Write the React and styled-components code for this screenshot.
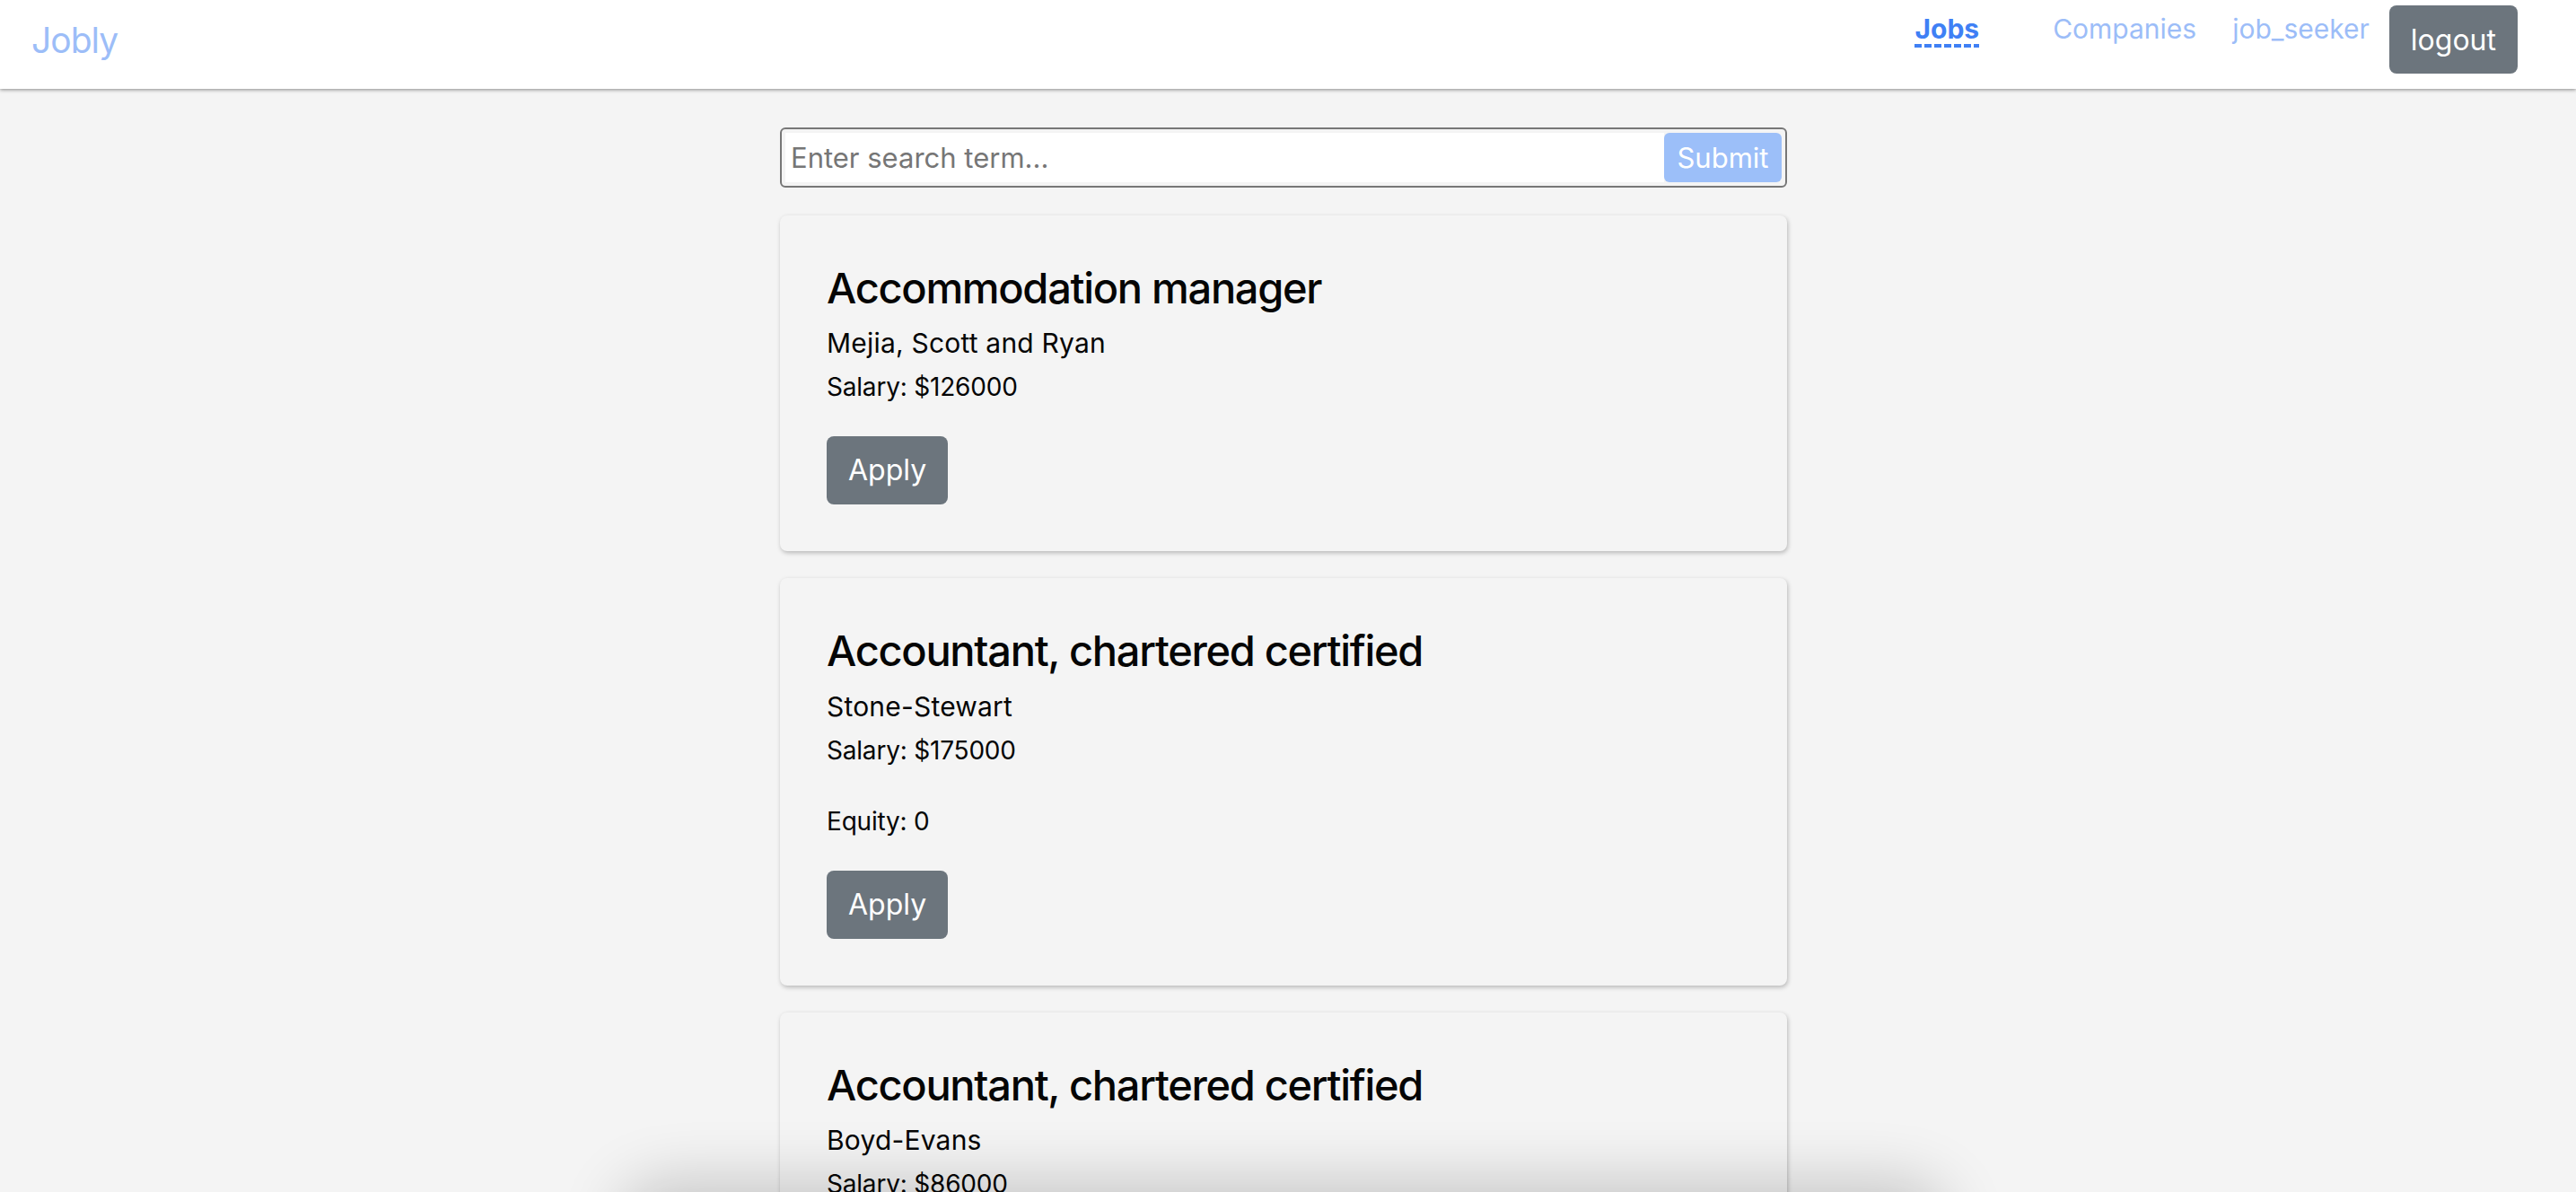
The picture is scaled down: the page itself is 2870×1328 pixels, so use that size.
import React from "react";
import styled, { createGlobalStyle } from "styled-components";

const COLOR = {
  PAGE: "#f4f4f4",
  LINK: "#9cbdf8",
  ACTIVE: "#3f80f5",
  GREY_BTN: "#6c757d",
  SUBMIT: "#9cbff9",
  TEXT: "#050505",
};

const FONT = `Inter, "Noto Sans", "Liberation Sans", sans-serif`;

const jobs = [
  { id: 1, title: "Accommodation manager", company: "Mejia, Scott and Ryan", salary: 126000, equity: null },
  { id: 2, title: "Accountant, chartered certified", company: "Stone-Stewart", salary: 175000, equity: "0" },
  { id: 3, title: "Accountant, chartered certified", company: "Boyd-Evans", salary: 86000, equity: "0" },
];

const App = () => {
  return (
    <>
      <GlobalStyle />
      <NavBar>
        <Brand href="#">Jobly</Brand>
        <NavList>
          <NavLink $active $space={0}>Jobs</NavLink>
          <NavLink $space={82}>Companies</NavLink>
          <NavLink $space={40}>job_seeker</NavLink>
          <LogoutButton>logout</LogoutButton>
        </NavList>
      </NavBar>
      <Main>
        <SearchForm onSubmit={(e) => e.preventDefault()}>
          <SearchInput placeholder="Enter search term..." />
          <SubmitButton type="submit">Submit</SubmitButton>
        </SearchForm>
        <CardList>
          {jobs.map((job) => (
            <JobCard key={job.id}>
              <JobTitle>{job.title}</JobTitle>
              <CompanyName>{job.company}</CompanyName>
              <Detail>Salary: ${job.salary}</Detail>
              {job.equity !== null && <Detail>Equity: {job.equity}</Detail>}
              <ApplyButton>Apply</ApplyButton>
            </JobCard>
          ))}
        </CardList>
      </Main>
      <BottomShade />
    </>
  );
};
export default App;

const GlobalStyle = createGlobalStyle`
  html, body {
    margin: 0;
    padding: 0;
    background: ${COLOR.PAGE};
    font-family: ${FONT};
    color: ${COLOR.TEXT};
    overflow: hidden;
  }
  * {
    box-sizing: border-box;
  }
`;

const NavBar = styled.nav`
  display: flex;
  align-items: flex-start;
  height: 99px;
  padding: 0 65px 0 35px;
  background: #ffffff;
  box-shadow: 0 1px 4px rgba(0, 0, 0, 0.45);
  position: relative;
  z-index: 1;
`;

const Brand = styled.a`
  margin-top: 21px;
  font-size: 39px;
  letter-spacing: -1px;
  line-height: 1.21;
  color: ${COLOR.LINK};
  text-decoration: none;
`;

const NavList = styled.div`
  display: flex;
  align-items: flex-start;
  margin-left: auto;
`;

const NavLink = styled.a`
  margin-top: 14px;
  margin-left: ${(p) => p.$space}px;
  padding-bottom: 3px;
  font-size: 30px;
  line-height: 1.21;
  font-weight: ${(p) => (p.$active ? 700 : 400)};
  color: ${(p) => (p.$active ? COLOR.ACTIVE : COLOR.LINK)};
  background: ${(p) =>
    p.$active
      ? `repeating-linear-gradient(90deg, ${COLOR.ACTIVE} 0 8px, transparent 8px 11px) left bottom / 100% 4px no-repeat`
      : "none"};
  cursor: pointer;
`;

const LogoutButton = styled.button`
  margin-top: 6px;
  margin-left: 22px;
  height: 76px;
  padding: 2px 24px 0;
  border: none;
  border-radius: 8px;
  background: ${COLOR.GREY_BTN};
  color: #ffffff;
  font-family: ${FONT};
  font-size: 32px;
  line-height: 48px;
  cursor: pointer;
`;

const Main = styled.main`
  display: flex;
  flex-direction: column;
  align-items: center;
  padding: 43px 10px 0 0;
`;

const SearchForm = styled.form`
  display: flex;
  width: 1122px;
  height: 67px;
  padding: 4px;
  border: 2px solid #777777;
  border-radius: 6px;
  background: ${COLOR.PAGE};
`;

const SearchInput = styled.input`
  flex: 1;
  min-width: 0;
  border: none;
  outline: none;
  padding: 0 6px;
  background: #ffffff;
  font-family: ${FONT};
  font-size: 31px;
  color: ${COLOR.TEXT};
  &::placeholder {
    color: #767676;
  }
`;

const SubmitButton = styled.button`
  width: 131px;
  border: none;
  border-radius: 6px;
  background: ${COLOR.SUBMIT};
  color: #ffffff;
  font-family: ${FONT};
  font-size: 31px;
  cursor: pointer;
`;

const CardList = styled.div`
  display: flex;
  flex-direction: column;
  gap: 30px;
  margin-top: 31px;
`;

const JobCard = styled.div`
  display: flex;
  flex-direction: column;
  align-items: flex-start;
  width: 1122px;
  padding: 53px 52px 52px;
  background: ${COLOR.PAGE};
  border-radius: 8px;
  box-shadow: 1px 2px 5px rgba(0, 0, 0, 0.25);
`;

const JobTitle = styled.h3`
  margin: 0 0 11px;
  font-size: 47px;
  font-weight: 500;
  letter-spacing: -1.3px;
  line-height: 1.2;
`;

const CompanyName = styled.div`
  margin-bottom: 2px;
  font-size: 30px;
  letter-spacing: 0.2px;
  line-height: 45px;
`;

const Detail = styled.p`
  margin: 0 0 31px;
  font-size: 28px;
  letter-spacing: -0.2px;
  line-height: 48px;
`;

const ApplyButton = styled.button`
  height: 76px;
  padding: 0 24px;
  border: none;
  border-radius: 8px;
  background: ${COLOR.GREY_BTN};
  color: #ffffff;
  font-family: ${FONT};
  font-size: 32px;
  line-height: 48px;
  cursor: pointer;
`;

const BottomShade = styled.div`
  position: fixed;
  left: 700px;
  bottom: -80px;
  width: 1460px;
  height: 80px;
  border-radius: 40px;
  box-shadow: 0 0 70px 10px rgba(0, 0, 0, 0.2);
  pointer-events: none;
`;
